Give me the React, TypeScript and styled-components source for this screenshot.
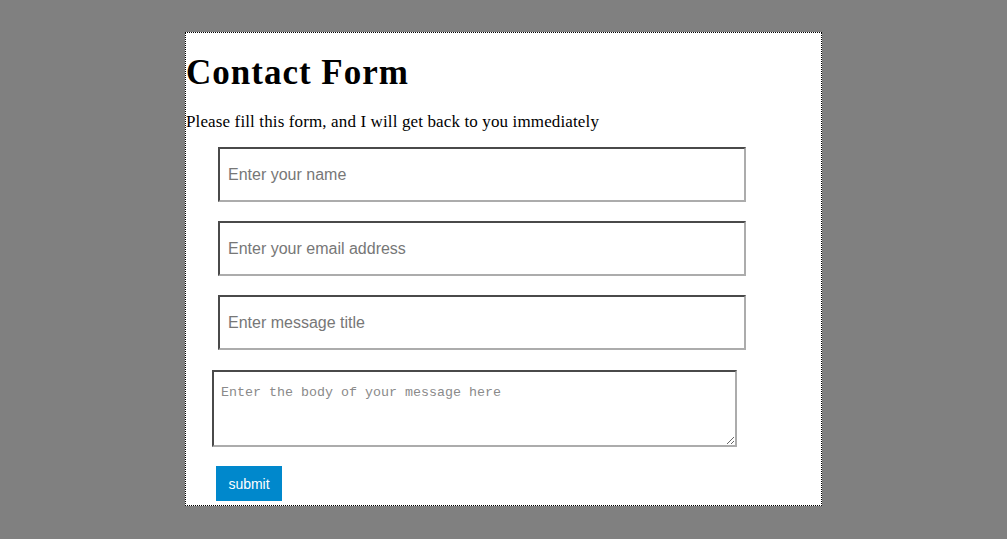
import styled, { createGlobalStyle } from "styled-components";

const GlobalStyle = createGlobalStyle`
    html, body {
        margin: 0;
        padding: 0;
        background-color: #808080;
    }
    body {
        height: 539px;
        overflow: hidden;
    }
`;

const Container = styled.div`
    width: 635px;
    height: 472px;
    margin: 32px auto 0;
    border: 1px dotted #000;
    background-color: #fff;
    font-family: "Liberation Serif", serif;
    color: #000;
`;

const Heading = styled.h1`
    margin: 20px 0 0;
    font-size: 35px;
    line-height: 40px;
    font-weight: bold;
    letter-spacing: 1px;
`;

const Intro = styled.p`
    margin: 20px 0 0;
    font-size: 17px;
    line-height: 18px;
    letter-spacing: 0.13px;
`;

const Form = styled.form`
    display: flex;
    flex-direction: column;
    align-items: flex-start;
    gap: 19px;
    margin-top: 16px;
`;

const Field = styled.input`
    box-sizing: border-box;
    width: 528px;
    height: 55px;
    margin-left: 32px;
    padding: 1px 8px 0;
    border: 2px solid;
    border-color: #4a4a4a #acacac #acacac #4a4a4a;
    font-family: "Liberation Sans", Arial, sans-serif;
    font-size: 16px;
    outline: none;

    &::placeholder {
        color: #777;
    }
`;

const Body = styled.textarea`
    box-sizing: border-box;
    width: 525px;
    height: 77px;
    margin: 1px 0 0 26px;
    padding: 13px 7px;
    border: 2px solid;
    border-color: #4a4a4a #acacac #acacac #4a4a4a;
    font-family: "Liberation Mono", "Courier New", monospace;
    font-size: 13.333px;
    line-height: 15px;
    outline: none;

    &::placeholder {
        color: #8a8a8a;
    }
`;

const Submit = styled.button`
    box-sizing: border-box;
    width: 66px;
    height: 35px;
    margin-left: 30px;
    padding: 0;
    border: none;
    background-color: #0088cc;
    color: #fff;
    font-family: "Liberation Sans", Arial, sans-serif;
    font-size: 14px;
`;

export default function App() {
    return (
        <>
            <GlobalStyle />
            <Container>
                <Heading>Contact Form</Heading>
                <Intro>Please fill this form, and I will get back to you immediately</Intro>
                <Form onSubmit={e => e.preventDefault()}>
                    <Field type="text" placeholder="Enter your name" />
                    <Field type="email" placeholder="Enter your email address" />
                    <Field type="text" placeholder="Enter message title" />
                    <Body placeholder="Enter the body of your message here" />
                    <Submit type="submit">submit</Submit>
                </Form>
            </Container>
        </>
    );
}
